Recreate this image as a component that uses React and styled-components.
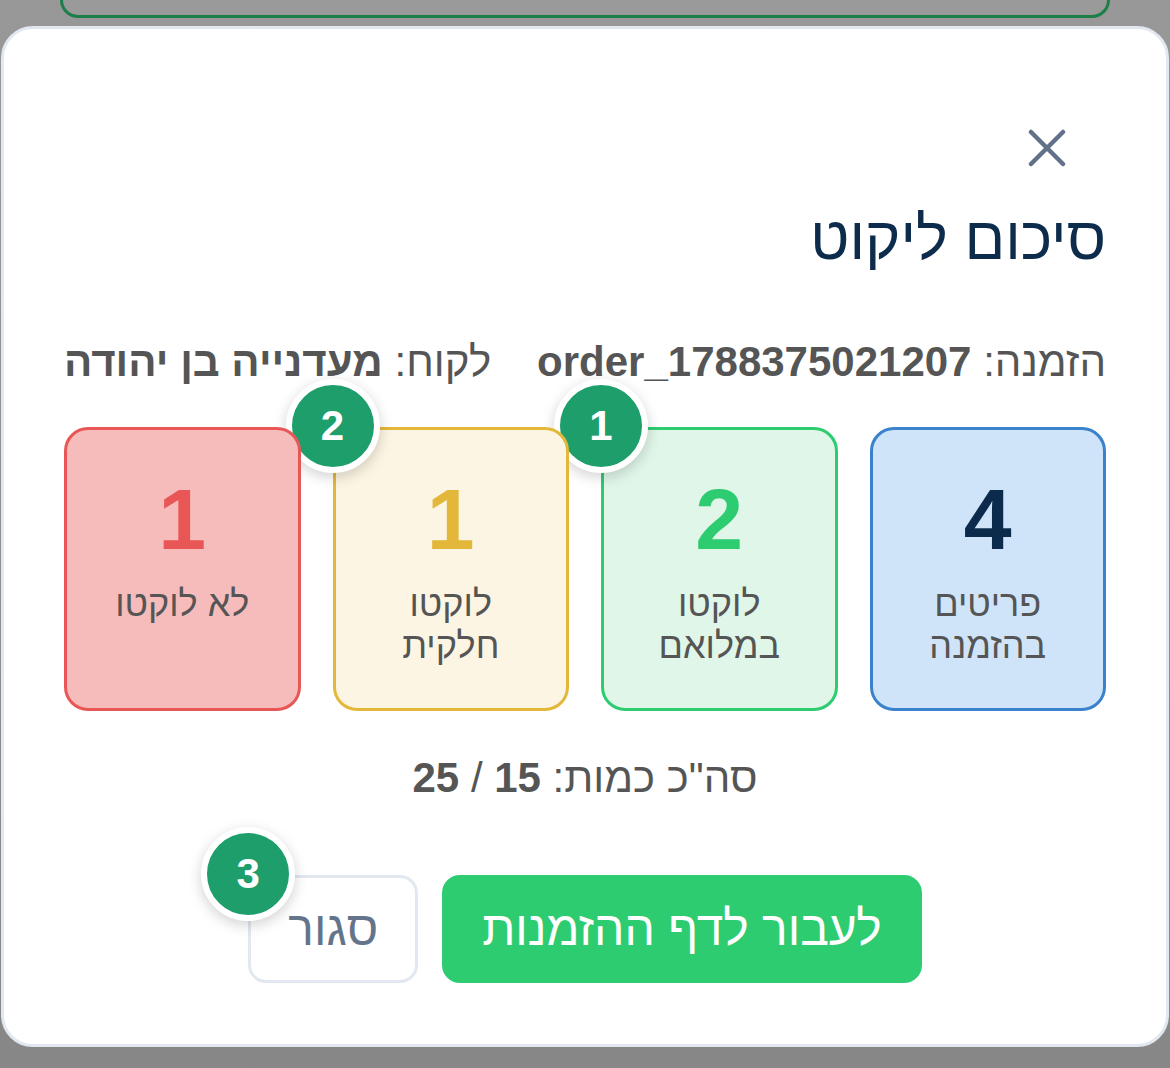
import React from 'react';
import styled, { createGlobalStyle } from 'styled-components';

const GlobalStyle = createGlobalStyle`
  html, body {
    margin: 0;
    padding: 0;
  }
  body {
    background: linear-gradient(#979897, #878787);
    min-height: 1068px;
    font-family: "Liberation Sans", Arial, sans-serif;
  }
`;

const stats = [
  { value: 4, label: 'פריטים בהזמנה', tone: 'blue' },
  { value: 2, label: 'לוקטו במלואם', tone: 'green', badge: 1 },
  { value: 1, label: 'לוקטו חלקית', tone: 'yellow', badge: 2 },
  { value: 1, label: 'לא לוקטו', tone: 'red' },
];

const tones = {
  blue: { bg: '#cfe4f8', border: '#3a82cc', num: '#0c2b4c' },
  green: { bg: '#e0f6e9', border: '#2ecc71', num: '#2ecc71' },
  yellow: { bg: '#fcf5e3', border: '#e3b83a', num: '#e3b83a' },
  red: { bg: '#f6bcbc', border: '#e95656', num: '#e95656' },
};

const App = () => {
  return (
    <>
      <GlobalStyle />
      <Page>
        <BackCard />
        <Modal dir="rtl">
          <CloseRow>
            <CloseButton aria-label="סגור">
              <svg width="38" height="38" viewBox="0 0 38 38" fill="none">
                <path d="M3 3 L35 35 M35 3 L3 35" stroke="#617189" strokeWidth="4.5" strokeLinecap="round" />
              </svg>
            </CloseButton>
          </CloseRow>
          <Title>סיכום ליקוט</Title>
          <InfoRow>
            <Info>הזמנה: <b>order_1788375021207</b></Info>
            <Info>לקוח: <b>מעדנייה בן יהודה</b></Info>
          </InfoRow>
          <Cards>
            {stats.map((s, i) => (
              <StatCard key={i} $tone={s.tone}>
                <StatValue $tone={s.tone}>{s.value}</StatValue>
                <StatLabel>{s.label}</StatLabel>
                {s.badge && <Badge>{s.badge}</Badge>}
              </StatCard>
            ))}
          </Cards>
          <Total>סה"כ כמות: <b>15</b> / <b>25</b></Total>
          <Actions>
            <PrimaryButton>לעבור לדף ההזמנות</PrimaryButton>
            <SecondaryButton>
              סגור
              <Badge>3</Badge>
            </SecondaryButton>
          </Actions>
        </Modal>
      </Page>
    </>
  );
};

const Page = styled.div`
  width: 1170px;
  padding-bottom: 24px;
`;

const BackCard = styled.div`
  height: 15px;
  margin: 0 60px;
  background: #9a9a9a;
  border: 3px solid #1b7f47;
  border-top: none;
  border-radius: 0 0 26px 26px;
`;

const Modal = styled.div`
  box-sizing: border-box;
  width: 1168px;
  margin: 8px 0 0 1px;
  background: #fff;
  border: 3px solid #e2e8f0;
  border-radius: 32px;
  padding: 0 60px 61px;
  color: #555;
`;

const CloseRow = styled.div`
  display: flex;
  justify-content: flex-start;
  padding: 100px 40px 0 0;
`;

const CloseButton = styled.button`
  width: 38px;
  height: 38px;
  padding: 0;
  border: none;
  background: none;
  display: flex;
  cursor: pointer;
`;

const Title = styled.h2`
  margin: 36px 0 0;
  font-size: 60px;
  line-height: 1.2;
  font-weight: 400;
  color: #0d2b4b;
`;

const InfoRow = styled.div`
  display: flex;
  justify-content: space-between;
  margin-top: 62px;
`;

const Info = styled.div`
  font-size: 42px;
  line-height: 1.2;
  color: #555;
  b {
    font-weight: 700;
  }
`;

const Cards = styled.div`
  display: grid;
  grid-template-columns: repeat(4, 1fr);
  gap: 32px;
  margin-top: 40px;
`;

const StatCard = styled.div`
  position: relative;
  box-sizing: border-box;
  height: 284px;
  padding: 46px 16px 40px;
  border: 3px solid ${(p) => tones[p.$tone].border};
  background: ${(p) => tones[p.$tone].bg};
  border-radius: 24px;
  text-align: center;
`;

const StatValue = styled.div`
  font-size: 86px;
  line-height: 1;
  font-weight: 700;
  color: ${(p) => tones[p.$tone].num};
`;

const StatLabel = styled.div`
  margin: 21px auto 0;
  max-width: 160px;
  font-size: 36px;
  line-height: 1.15;
  color: #555;
`;

const Badge = styled.span`
  position: absolute;
  top: -4px;
  left: -3px;
  transform: translate(-50%, -50%);
  box-sizing: border-box;
  width: 94px;
  height: 94px;
  border-radius: 50%;
  background: #1e9e6b;
  border: 6px solid #fff;
  box-shadow: 0 4px 14px rgba(0, 0, 0, 0.18);
  color: #fff;
  font-family: "Liberation Sans", Arial, sans-serif;
  font-size: 42px;
  line-height: 1;
  font-weight: 700;
  display: flex;
  align-items: center;
  justify-content: center;
`;

const Total = styled.div`
  margin-top: 42px;
  text-align: center;
  font-size: 42px;
  line-height: 1.2;
  color: #555;
  b {
    font-weight: 700;
  }
`;

const Actions = styled.div`
  display: flex;
  justify-content: center;
  gap: 24px;
  margin-top: 71px;
`;

const ButtonBase = styled.button`
  position: relative;
  box-sizing: border-box;
  height: 108px;
  padding: 0 37px;
  border-radius: 18px;
  font-family: "Liberation Sans", Arial, sans-serif;
  font-size: 48px;
  line-height: 1.2;
  cursor: pointer;
`;

const PrimaryButton = styled(ButtonBase)`
  background: #2ecc71;
  border: 3px solid #2ecc71;
  color: #fff;
`;

const SecondaryButton = styled(ButtonBase)`
  background: #fff;
  border: 3px solid #e2e8f0;
  color: #64748b;
`;

export default App;
